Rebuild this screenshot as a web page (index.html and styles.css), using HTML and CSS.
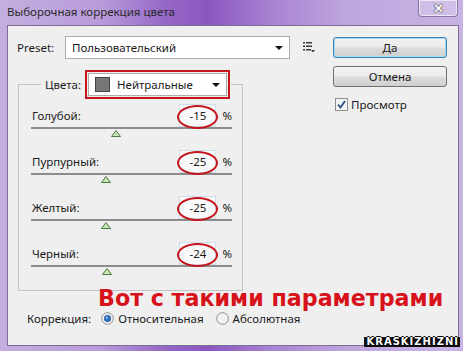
FILE: index.html
```html
<!DOCTYPE html>
<html lang="ru">
  <head>
    <meta charset="UTF-8" />
    <title>Выборочная коррекция цвета</title>
    <link rel="stylesheet" href="styles.css">
  </head>
  <body>
    <div class="window">
      <div class="titlebar">
        <span class="title">Выборочная коррекция цвета</span>
        <span class="close">✕</span>
      </div>
      <div class="client">
        <div class="main">
          <div class="preset-row">
            <label>Preset:</label>
            <div class="combo preset-combo">
              <span>Пользовательский</span>
              <span class="arrow"></span>
            </div>
            <svg class="menu-icon" width="12" height="11" viewBox="0 0 12 11">
              <g fill="#3a3a3a">
                <rect x="0" y="0" width="2" height="1.5" />
                <rect x="3" y="0" width="6" height="1.5" />
                <rect x="0" y="3.5" width="2" height="1.5" />
                <rect x="3" y="3.5" width="6" height="1.5" />
                <rect x="0" y="7" width="2" height="1.5" />
                <rect x="3" y="7" width="5" height="1.5" />
                <polygon points="8,8 12,8 10,10.5" />
              </g>
            </svg>
          </div>
          <fieldset class="colors">
            <legend>
              <span class="legend-label">Цвета:</span>
              <div class="combo color-combo">
                <span class="swatch"></span>
                <span>Нейтральные</span>
                <span class="arrow"></span>
              </div>
            </legend>
            <div class="rows">
              <div class="slider-row">
                <div class="head">
                  <span class="name">Голубой:</span>
                  <span class="value">-15</span>
                  <span class="pct">%</span>
                </div>
                <div class="track"></div>
                <svg class="thumb" style="margin-left: 80px" width="10" height="7" viewBox="0 0 10 7"><polygon points="5,0.5 9.5,6.5 0.5,6.5" /></svg>
              </div>
              <div class="slider-row">
                <div class="head">
                  <span class="name">Пурпурный:</span>
                  <span class="value">-25</span>
                  <span class="pct">%</span>
                </div>
                <div class="track"></div>
                <svg class="thumb" style="margin-left: 70px" width="10" height="7" viewBox="0 0 10 7"><polygon points="5,0.5 9.5,6.5 0.5,6.5" /></svg>
              </div>
              <div class="slider-row">
                <div class="head">
                  <span class="name">Желтый:</span>
                  <span class="value">-25</span>
                  <span class="pct">%</span>
                </div>
                <div class="track"></div>
                <svg class="thumb" style="margin-left: 70px" width="10" height="7" viewBox="0 0 10 7"><polygon points="5,0.5 9.5,6.5 0.5,6.5" /></svg>
              </div>
              <div class="slider-row">
                <div class="head">
                  <span class="name">Черный:</span>
                  <span class="value">-24</span>
                  <span class="pct">%</span>
                </div>
                <div class="track"></div>
                <svg class="thumb" style="margin-left: 71px" width="10" height="7" viewBox="0 0 10 7"><polygon points="5,0.5 9.5,6.5 0.5,6.5" /></svg>
              </div>
            </div>
          </fieldset>
          <div class="note">Вот с такими параметрами</div>
          <div class="mode-row">
            <span class="mode-label">Коррекция:</span>
            <span class="radio-item">
              <svg width="13" height="13" viewBox="0 0 13 13">
                <circle cx="6.5" cy="6.5" r="5.8" fill="#f6f6f6" stroke="#8a8c8e" />
                <circle cx="6.5" cy="6.5" r="3.3" fill="#2a6fc0" stroke="#1c4f8f" stroke-width="0.6" />
                <circle cx="5.7" cy="5.6" r="1.2" fill="#8fc2f2" />
              </svg>
              Относительная
            </span>
            <span class="radio-item">
              <svg width="13" height="13" viewBox="0 0 13 13">
                <circle cx="6.5" cy="6.5" r="5.8" fill="#f2f2f2" stroke="#8a8c8e" />
              </svg>
              Абсолютная
            </span>
          </div>
        </div>
        <div class="side">
          <button class="btn default">Да</button>
          <button class="btn">Отмена</button>
          <label class="check">
            <svg width="13" height="13" viewBox="0 0 13 13">
              <rect x="0.5" y="0.5" width="12" height="12" fill="#f4f4f4" stroke="#8e8f8f" />
              <path d="M3 6.5 L5.5 9.5 L10 3" fill="none" stroke="#2b4e86" stroke-width="1.8" />
            </svg>
            Просмотр
          </label>
        </div>
      </div>
      <div class="watermark">KRASKIZHIZNI</div>
    </div>
  </body>
</html>
```

FILE: styles.css
```css
* {
  box-sizing: border-box;
}
html,
body {
  margin: 0;
  font-family: "Noto Sans", "Open Sans", sans-serif;
  font-size: 11.5px;
  color: #1a1a1a;
}
.window {
  position: relative;
  width: 463px;
  height: 351px;
  padding: 0 4px 5px 7px;
  display: flex;
  flex-direction: column;
  background: linear-gradient(90deg, #c4aee0 0%, #b89bda 22%, #9466c6 36%, #8a57c0 45%, #a781d2 58%, #bea6de 75%, #c7b3e3 100%);
}
.titlebar {
  height: 25px;
  display: flex;
  align-items: center;
}
.title {
  color: #2b2b2b;
  font-size: 11.5px;
  margin-top: -2px;
}
.close {
  margin-left: auto;
  margin-right: 1px;
  align-self: flex-start;
  width: 40px;
  height: 17px;
  border: 1px solid rgba(80, 60, 110, 0.55);
  border-top: 0;
  border-radius: 0 0 4px 4px;
  background: rgba(255, 255, 255, 0.18);
  box-shadow: inset 0 0 0 1px rgba(255, 255, 255, 0.6);
  color: #fff;
  font-weight: 700;
  font-size: 13px;
  line-height: 16px;
  text-align: center;
  text-shadow: 0 0 1px #333, 0 0 1px #333, 0 0 1px #333;
}
.client {
  flex: 1;
  display: flex;
  background: #efefef;
  border: 1px solid #7c6e93;
}
.main {
  width: 325px;
  padding: 10px 0 0 9px;
}
.preset-row {
  height: 23px;
  display: flex;
  align-items: center;
}
.preset-row label {
  width: 48px;
}
.combo {
  height: 23px;
  display: flex;
  align-items: center;
  background: #fff;
  border: 1px solid #abadb3;
  padding: 0 6px;
}
.preset-combo {
  width: 225px;
}
.arrow {
  margin-left: auto;
  width: 0;
  height: 0;
  border-left: 4px solid transparent;
  border-right: 4px solid transparent;
  border-top: 4px solid #111;
}
.menu-icon {
  margin-left: 13px;
}
.colors {
  margin: 14px 0 0 1px;
  width: 225px;
  padding: 8px 10px 13px 12px;
  border: 1px solid #c4c4c4;
  min-inline-size: 0;
}
.colors legend {
  display: flex;
  align-items: center;
  gap: 6px;
  padding: 0 4px;
  margin-left: 10px;
}
.legend-label {
  width: 37px;
}
.color-combo {
  width: 139px;
  outline: 2px solid #c8161e;
  outline-offset: 1px;
}
.swatch {
  width: 15px;
  height: 15px;
  background: #777;
  border: 1px solid #444;
  margin-right: 7px;
}
.rows {
  display: flex;
  flex-direction: column;
  gap: 11px;
}
.slider-row {
  height: 35px;
}
.head {
  height: 23px;
  display: flex;
  align-items: center;
}
.name {
  flex: 1;
  padding-left: 1px;
}
.value {
  position: relative;
  width: 37px;
  height: 23px;
  display: flex;
  align-items: center;
  justify-content: center;
  background: #f9f9f9;
  border: 1px solid #cfdfe9;
}
.value::after {
  content: "";
  position: absolute;
  inset: 0 -3px -3px -3px;
  border: 2px solid #c4141c;
  border-radius: 50%;
}
.pct {
  margin-left: 6px;
}
.track {
  height: 2px;
  background: #8c8c8c;
}
.thumb {
  display: block;
  margin-top: 1px;
  fill: #c7e4b8;
  stroke: #4c7a40;
  stroke-width: 1;
}
.note {
  margin: -3px 0 0 81px;
  white-space: nowrap;
  font-family: "DejaVu Sans", sans-serif;
  font-weight: 700;
  font-size: 22.2px;
  line-height: 20px;
  color: #d8121a;
}
.mode-row {
  margin-top: 2px;
  height: 16px;
  padding-left: 10px;
  display: flex;
  align-items: center;
}
.mode-label {
  margin-right: 10px;
}
.radio-item {
  display: flex;
  align-items: center;
  gap: 4px;
  margin-right: 12px;
}
.side {
  flex: 1;
  padding-top: 11px;
}
.btn {
  display: block;
  width: 114px;
  height: 21px;
  padding: 0;
  font: inherit;
  color: #1a1a1a;
  border: 1px solid #707070;
  border-radius: 3px;
  background: linear-gradient(#f3f3f3 0%, #ebebeb 48%, #dddddd 52%, #cfcfcf 100%);
}
.btn.default {
  border-color: #3c7fb1;
  box-shadow: inset 0 0 0 1px #9fdcf5;
}
.btn + .btn {
  margin-top: 8px;
}
.check {
  margin-top: 10px;
  padding-left: 2px;
  display: flex;
  align-items: center;
  gap: 3px;
}
.watermark {
  position: absolute;
  right: 3px;
  bottom: 4px;
  font-family: "DejaVu Sans", sans-serif;
  font-weight: 700;
  font-size: 10px;
  line-height: 10px;
  letter-spacing: 1px;
  color: #fff;
  background: #111;
  padding: 0 1px 0 2px;
  text-shadow: 1px 0 0 #000, -1px 0 0 #000, 0 1px 0 #000, 0 -1px 0 #000;
}
```
